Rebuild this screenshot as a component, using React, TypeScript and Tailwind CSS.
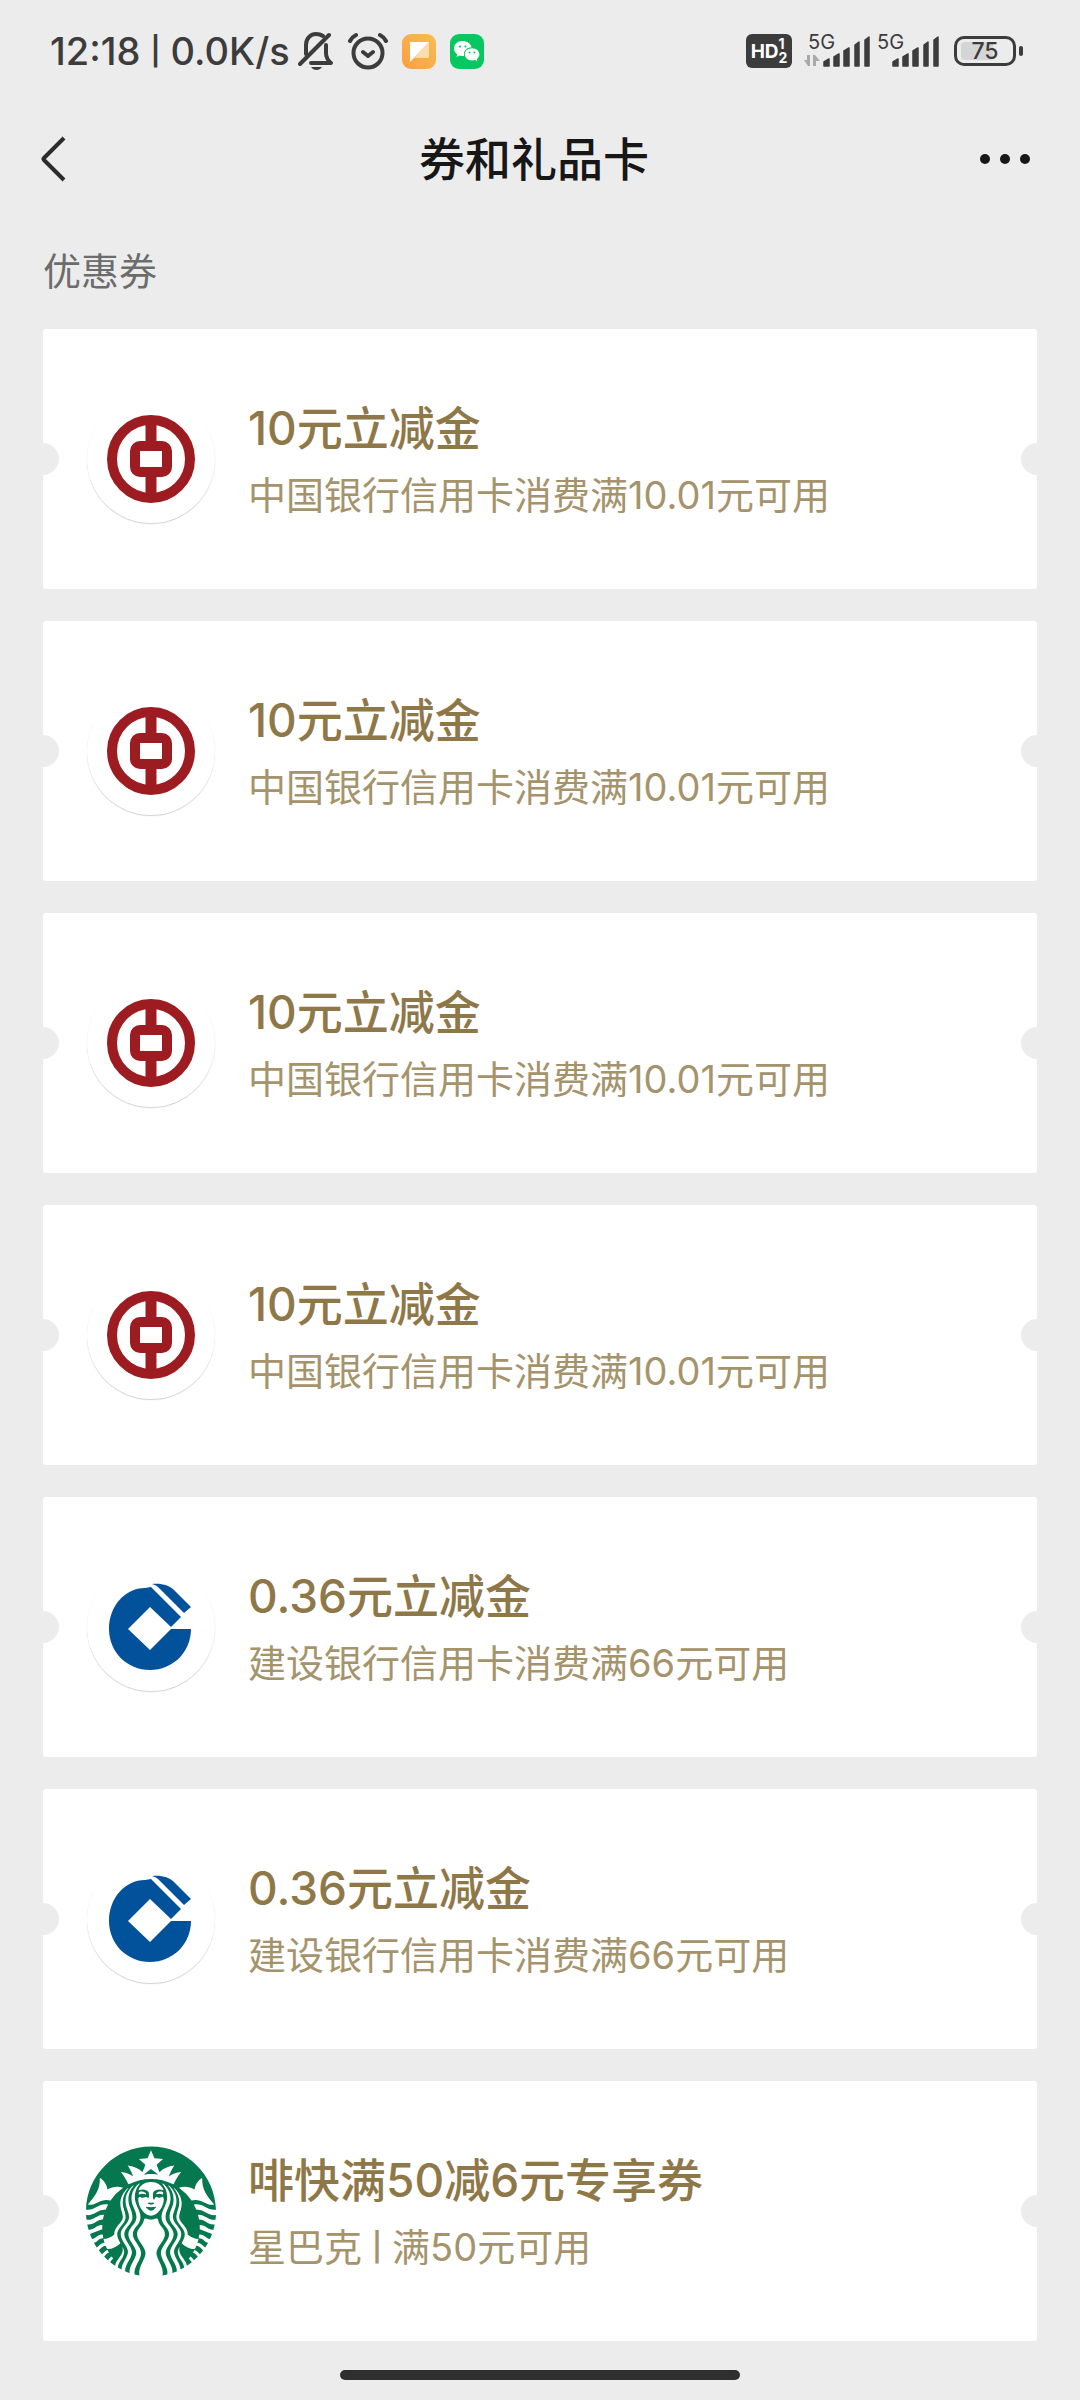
import React from "react";
import { SiStarbucks } from "react-icons/si";

type Brand = "boc" | "ccb" | "starbucks";

interface Coupon {
  id: number;
  brand: Brand;
  title: string;
  note: string[];
}

const coupons: Coupon[] = [
  { id: 1, brand: "boc", title: "10元立减金", note: ["中国银行信用卡消费满10.01元可用"] },
  { id: 2, brand: "boc", title: "10元立减金", note: ["中国银行信用卡消费满10.01元可用"] },
  { id: 3, brand: "boc", title: "10元立减金", note: ["中国银行信用卡消费满10.01元可用"] },
  { id: 4, brand: "boc", title: "10元立减金", note: ["中国银行信用卡消费满10.01元可用"] },
  { id: 5, brand: "ccb", title: "0.36元立减金", note: ["建设银行信用卡消费满66元可用"] },
  { id: 6, brand: "ccb", title: "0.36元立减金", note: ["建设银行信用卡消费满66元可用"] },
  { id: 7, brand: "starbucks", title: "啡快满50减6元专享券", note: ["星巴克", "满50元可用"] },
];

function BocLogo() {
  return (
    <svg viewBox="0 0 88 88" className="size-[88px]" fill="none" stroke="#9c1c22" aria-label="中国银行">
      <circle cx="44" cy="44" r="39" strokeWidth="10" />
      <path d="M44 5V30M44 58V83" strokeWidth="11" />
      <rect x="28" y="31" width="32" height="26" rx="5" strokeWidth="10" />
    </svg>
  );
}

function CcbLogo() {
  return (
    <svg viewBox="1 0 84 88" className="h-[88px] w-[84px]" fill="#02529b" aria-label="建设银行">
      <path d="M37 5C17 5 1 23 1 46C1 69 19 87 42 87C65 87 83 69 83 46H63L42 67L20 46L42 24L63 44L73 34L43 4Z" />
      <path d="M44 1C53 0 61 2 66 7L83 24L76 30L50 4Q48 2 44 1Z" />
    </svg>
  );
}

function BrandLogo({ brand }: { brand: Brand }) {
  if (brand === "starbucks") {
    return (
      <div className="flex size-32 shrink-0 items-center justify-center">
        <SiStarbucks className="size-[130px] shrink-0 text-[#06784f]" aria-label="星巴克" />
      </div>
    );
  }
  return (
    <div className="flex size-32 shrink-0 items-center justify-center rounded-full bg-white shadow-[0_1px_1px_rgba(0,0,0,0.18)]">
      {brand === "boc" ? <BocLogo /> : <CcbLogo />}
    </div>
  );
}

function Divider() {
  return <span className="text-[28px] leading-none font-semibold">|</span>;
}

function CouponCard({ coupon }: { coupon: Coupon }) {
  return (
    <li>
      <a
        href={`#coupon-${coupon.id}`}
        className="relative flex h-[260px] items-center gap-[33px] overflow-hidden rounded-[3px] bg-white pl-11"
      >
        <span className="absolute top-1/2 -left-4 size-8 -translate-y-1/2 rounded-full bg-[#ececec]" />
        <span className="absolute top-1/2 -right-4 size-8 -translate-y-1/2 rounded-full bg-[#ececec]" />
        <BrandLogo brand={coupon.brand} />
        <div className="flex flex-col gap-2">
          <h2 className="text-[46px] leading-[64px] font-medium text-[#8f7848]">{coupon.title}</h2>
          <p className="flex items-center gap-[10px] text-[38px] leading-[54px] text-[#a5946b]">
            {coupon.note.map((part, i) => (
              <React.Fragment key={part}>
                {i > 0 && <Divider />}
                <span>{part}</span>
              </React.Fragment>
            ))}
          </p>
        </div>
      </a>
    </li>
  );
}

function BellOff() {
  return (
    <svg viewBox="0 0 36 40" className="h-10 w-9" fill="none" stroke="#3c3c3c" strokeWidth="4" strokeLinecap="round" strokeLinejoin="round">
      <path d="M8 23V14C8 7 13 3 18 3Q22 3 25 5" />
      <path d="M31 4L2 33" />
      <path d="M28 14V22Q28 28 33 32H13" />
      <path d="M13 36H24Q22 39 18.500 39Q15 39 13 36Z" fill="#3c3c3c" stroke="none" />
    </svg>
  );
}

function Alarm() {
  return (
    <svg viewBox="0 0 40 40" className="size-10" fill="none" stroke="#3c3c3c" strokeWidth="4" strokeLinecap="round" strokeLinejoin="round">
      <circle cx="20" cy="22" r="14.500" />
      <path d="M2 10Q4 6 8 4M38 10Q36 6 32 4M15 21L20 25L25 21" />
    </svg>
  );
}

function NoteApp() {
  return (
    <svg viewBox="0 0 34 35" className="h-[35px] w-[34px]">
      <defs>
        <linearGradient id="note-bg" x1="1" y1="0" x2="0" y2="1">
          <stop offset="0" stopColor="#f8bd50" />
          <stop offset="1" stopColor="#fb9f42" />
        </linearGradient>
      </defs>
      <rect width="34" height="35" rx="9" fill="url(#note-bg)" />
      <path d="M8 8H27L8 28Z" fill="#fff" />
      <path d="M27 8V23Q27 24 26 24H12Z" fill="#fddcae" />
    </svg>
  );
}

function WeChatApp() {
  return (
    <svg viewBox="0 0 34 35" className="h-[35px] w-[34px]">
      <rect width="34" height="35" rx="9" fill="#07c860" />
      <path d="M12.500 7C7.500 7 4 10.500 4 14.500C4 17 5.200 19 7.300 20.400L6.500 23L9.500 21.500Q12 22.300 14 22L14 20C14 16 17.500 13.200 21.500 13.200C20.600 9.500 17 7 12.500 7Z" fill="#fff" />
      <path d="M22 14.200C17.800 14.200 14.800 17 14.800 20.300C14.800 23.700 17.800 26.400 22 26.400Q23.500 26.400 25 26L27.300 27.300L26.800 25C28.500 23.800 29.400 22.200 29.400 20.300C29.400 17 26.200 14.200 22 14.200Z" fill="#fff" />
      <g fill="#07c860">
        <circle cx="10" cy="12.500" r="1.100" />
        <circle cx="15.500" cy="12.500" r="1.100" />
        <circle cx="19.500" cy="18.500" r="1" />
        <circle cx="24.500" cy="18.500" r="1" />
      </g>
    </svg>
  );
}

function Signal({ arrows = false }: { arrows?: boolean }) {
  return (
    <div className="relative h-[34px] w-[69px]">
      <span className="absolute -top-1 left-1 text-[20px] leading-6">5G</span>
      <svg viewBox="0 0 69 34" className="h-[34px] w-[69px]" fill="#3c3c3c">
        {arrows && <path d="M6 21V32H4L0 26H3V21ZM9 32V21H11L16 27H12V32Z" fill="#a9a9a9" />}
        <path
          d="M20 28L25 25V32H20ZM30 23L35 20V32H30ZM40 17L45 14V32H40ZM51 11L55 8V32H51ZM61 6L65 3V32H61Z"
          stroke="#3c3c3c"
          strokeWidth="1.500"
          strokeLinejoin="round"
        />
      </svg>
    </div>
  );
}

function StatusBar() {
  return (
    <div className="flex h-[102px] items-center justify-between pr-[57px] pl-[50px] text-[#3c3c3c]">
      <div className="flex items-center gap-2">
        <div className="flex items-center gap-[10px] text-[38px] leading-[48px] font-medium whitespace-nowrap">
          <span>12:18</span>
          <Divider />
          <span>0.0K/s</span>
        </div>
        <div className="flex items-center gap-[14px]">
          <BellOff />
          <Alarm />
          <NoteApp />
          <WeChatApp />
        </div>
      </div>
      <div className="flex items-center">
        <div className="mr-3 flex h-[34px] w-[46px] items-center justify-center rounded-md bg-[#3c3c3c] font-bold text-white">
          <span className="text-[19px] leading-none">HD</span>
          <span className="flex flex-col text-[14px] leading-[14px]">
            <span>1</span>
            <span>2</span>
          </span>
        </div>
        <Signal arrows />
        <Signal />
        <div className="ml-3 flex items-center gap-[3px]">
          <div className="relative flex h-[30px] w-[62px] items-center justify-center rounded-[10px] border-3 border-[#3c3c3c]">
            <span className="absolute inset-y-[3px] left-1 w-8 rounded-sm bg-[#d5d5d5]" />
            <span className="relative text-[23px] leading-6 font-medium">75</span>
          </div>
          <span className="h-[10px] w-1 rounded-sm bg-[#3c3c3c]" />
        </div>
      </div>
    </div>
  );
}

export default function App() {
  return (
    <div className="flex min-h-screen flex-col bg-[#ececec] font-[Inter,'Noto_Sans_CJK_SC',sans-serif]">
      <StatusBar />
      <header className="flex h-[114px] items-center">
        <button type="button" aria-label="返回" className="flex h-full w-[108px] items-center pl-10">
          <svg viewBox="0 0 26 46" className="h-[46px] w-[26px]" fill="none" stroke="#2b2b2b" strokeWidth="4">
            <path d="M24 2L4 22Q3 23 4 24L24 44" />
          </svg>
        </button>
        <h1 className="flex-1 text-center text-[46px] leading-[64px] font-medium text-[#171717]">券和礼品卡</h1>
        <button type="button" aria-label="更多" className="flex h-full w-[120px] items-center justify-end gap-[10px] pr-[50px]">
          <span className="size-[10px] rounded-full bg-[#171717]" />
          <span className="size-[10px] rounded-full bg-[#171717]" />
          <span className="size-[10px] rounded-full bg-[#171717]" />
        </button>
      </header>
      <main className="px-[43px]">
        <div className="flex h-[113px] items-center pb-1 text-[38px] leading-[54px] text-[#6c6c6c]">优惠券</div>
        <ul className="flex flex-col gap-8">
          {coupons.map((coupon) => (
            <CouponCard key={coupon.id} coupon={coupon} />
          ))}
        </ul>
      </main>
      <div className="mx-auto mt-auto mb-5 h-[10px] w-[400px] rounded-full bg-[#2f2f2f]" />
    </div>
  );
}
